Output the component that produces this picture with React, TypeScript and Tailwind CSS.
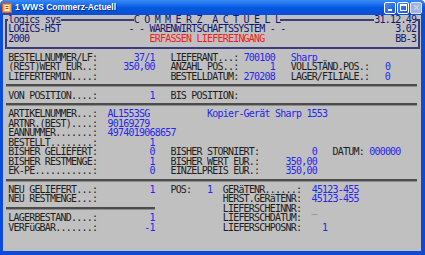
type Seg = [number, string, string]

const N = "#141470"
const L = "#1e1e1e"
const B = "#2626ee"
const R = "#f41c1c"
const G = "#6a6a6a"

// one terminal row: segments placed at character columns, padded with spaces
function Row({ segs, from = 0 }: { segs: Seg[]; from?: number }) {
  let col = from
  const parts: React.ReactNode[] = []
  segs.forEach(([c, text, color], i) => {
    const pad = c > col ? " ".repeat(c - col) : ""
    parts.push(
      <span key={i} style={{ color }}>
        {pad + text}
      </span>
    )
    col = c + text.length
  })
  return <div className="h-[9.44px] leading-[9.44px] whitespace-pre">{parts.length ? parts : " "}</div>
}

function Sep({ w = "w-[411px]" }: { w?: string }) {
  return (
    <div className="h-[9.44px] flex items-center">
      <div className={`ml-[3px] ${w} h-[3px] border-t-2 border-[#4c4c4c] border-b border-b-[#8c8c8c]`} />
    </div>
  )
}

const rows: Seg[][] = [
  [[1, "BESTELLNUMMER/LF:", L], [25, "37/1", B], [32, "LIEFERANT...:", L], [46, "700100", B], [55, "Sharp", B]],
  [[1, "(REST)WERT EUR..:", L], [23, "350,00", B], [32, "ANZAHL POS..:", L], [51, "1", B], [55, "VOLLSTÄND.POS.:", L], [73, "0", B]],
  [[1, "LIEFERTERMIN....:", L], [32, "BESTELLDATUM:", L], [46, "270208", B], [55, "LAGER/FILIALE.:", L], [73, "0", B]],
]

const article: Seg[][] = [
  [[1, "ARTIKELNUMMER...:", L], [20, "AL1553SG", B], [39, "Kopier-Gerät Sharp 1553", B]],
  [[1, "ARTNR.(BEST)....:", L], [20, "90169279", B]],
  [[1, "EANNUMMER.......:", L], [20, "4974019068657", B]],
  [[1, "BESTELLT........:", L], [28, "1", B]],
  [[1, "BISHER GELIEFERT:", L], [28, "0", B], [32, "BISHER STORNIERT:", L], [59, "0", B], [63, "DATUM:", L], [70, "000000", B]],
  [[1, "BISHER RESTMENGE:", L], [28, "1", B], [32, "BISHER WERT EUR.:", L], [54, "350,00", B]],
  [[1, "EK-PE...........:", L], [28, "0", B], [32, "EINZELPREIS EUR.:", L], [54, "350,00", B]],
]

export default function App() {
  return (
    <div className="w-[425px] h-[255px] flex flex-col bg-[#0b4bd6] overflow-hidden rounded-t-[5px]">
      {/* title bar */}
      <div className="h-[15px] shrink-0 flex items-center bg-gradient-to-b from-[#3a8cf6] via-[#0558e2] to-[#0a4ed2] pl-[2px] pr-[3px]">
        <svg width="10" height="10" viewBox="0 0 10 10" className="mr-[3px]">
          <rect x="0" y="0" width="10" height="10" fill="#e8591a" />
          <rect x="1" y="1" width="8" height="8" fill="#f7a23a" />
          <rect x="2.5" y="2" width="5" height="6" fill="#fff3d8" />
          <rect x="3.5" y="3" width="3" height="1" fill="#d0401a" />
          <rect x="3.5" y="5" width="3" height="1" fill="#d0401a" />
        </svg>
        <span className="text-white font-bold text-[8.5px] [font-family:'Liberation_Sans',Arial,sans-serif] [text-shadow:1px_1px_0_#0a2a8a]">
          1 WWS Commerz-Actuell
        </span>
        <div className="ml-auto flex gap-[1px]">
          <div className="w-[12px] h-[12px] rounded-[2px] border border-white bg-gradient-to-br from-[#4b8cf8] to-[#1b55d8] flex items-end pl-[3px] pb-[2px]">
            <div className="w-[4px] h-[2px] bg-white" />
          </div>
          <div className="w-[12px] h-[12px] rounded-[2px] border border-white bg-gradient-to-br from-[#4b8cf8] to-[#1b55d8] flex items-center justify-center">
            <div className="w-[7px] h-[7px] border border-white border-t-2" />
          </div>
          <div className="w-[12px] h-[12px] rounded-[2px] border border-[#dfe6f5] bg-[#9eb3e4] flex items-center justify-center">
            <svg width="7" height="7" viewBox="0 0 7 7">
              <path d="M1 1L6 6M6 1L1 6" stroke="#c8d3ee" strokeWidth="1.3" />
            </svg>
          </div>
        </div>
      </div>

      {/* terminal screen */}
      <div className="flex-1 ml-[3px] mr-[4px] mb-[4px] bg-[#c0c0c0] text-[10px] tracking-[-0.79px] [font-family:'DejaVu_Sans_Mono',monospace]">
        {/* header box */}
        <div className="h-[9.44px] flex ml-[1.6px] w-[415.2px] leading-[9.44px] whitespace-pre">
          <div className="w-[3.63px] mt-[3.7px] border-l-2 border-t-2 border-[#3c3c7c]" />
          <span style={{ color: N }}>logics sys</span>
          <div className="w-[73.2px] mt-[3.7px] border-t-2 border-[#3c3c7c]" />
          <span style={{ color: N }}>C O M M E R Z  A C T U E L L</span>
          <div className="w-[94.1px] mt-[3.7px] border-t-2 border-[#3c3c7c]" />
          <span style={{ color: N }}>31.12.49</span>
          <div className="flex-1 mt-[3.7px] border-t-2 border-r-2 border-[#3c3c7c]" />
        </div>
        <div className="ml-[1.6px] w-[415.2px] border-x-2 border-[#3c3c7c] pl-[1.63px]">
          <Row from={1} segs={[[1, "LOGICS-HST", N], [24, "- - WARENWIRTSCHAFTSSYSTEM - -", N], [75, "3.02", N]]} />
          <Row from={1} segs={[[1, "2000", N], [28, "ERFASSEN LIEFEREINGANG", R], [75, "BB-3", N]]} />
        </div>
        <div className="h-[9.44px]">
          <div className="ml-[1.6px] w-[415.2px] h-[5.7px] border-x-2 border-b-2 border-[#3c3c7c]" />
        </div>

        {rows.map((r, i) => (
          <Row key={i} segs={r} />
        ))}
        <Sep />
        <Row segs={[[1, "VON POSITION....:", L], [28, "1", B], [32, "BIS POSITION:", L]]} />
        <Sep />
        {article.map((r, i) => (
          <Row key={i} segs={r} />
        ))}
        <Sep />
        <Row segs={[[1, "NEU GELIEFERT...:", L], [28, "1", B], [32, "POS:", L], [39, "1", B], [42, "GERäTENR......:", L], [59, "45123-455", B]]} />
        <Row segs={[[1, "NEU RESTMENGE...:", L], [42, "HERST.GERäTENR:", L], [59, "45123-455", B]]} />
        <div className="h-[9.44px] flex items-center">
          <div className="ml-[3px] w-[149px] h-[3px] border-t-2 border-[#4c4c4c] border-b border-b-[#8c8c8c]" />
          <div className="ml-[67.66px]">
            <Row from={42} segs={[[42, "LIEFERSCHEINNR:", L], [59, "_", G]]} />
          </div>
        </div>
        <Row segs={[[1, "LAGERBESTAND....:", L], [28, "1", B], [42, "LIEFERSCHDATUM:", L]]} />
        <Row segs={[[1, "VERFüGBAR.......:", L], [27, "-1", B], [42, "LIEFERSCHPOSNR:", L], [61, "1", B]]} />
      </div>
    </div>
  )
}
